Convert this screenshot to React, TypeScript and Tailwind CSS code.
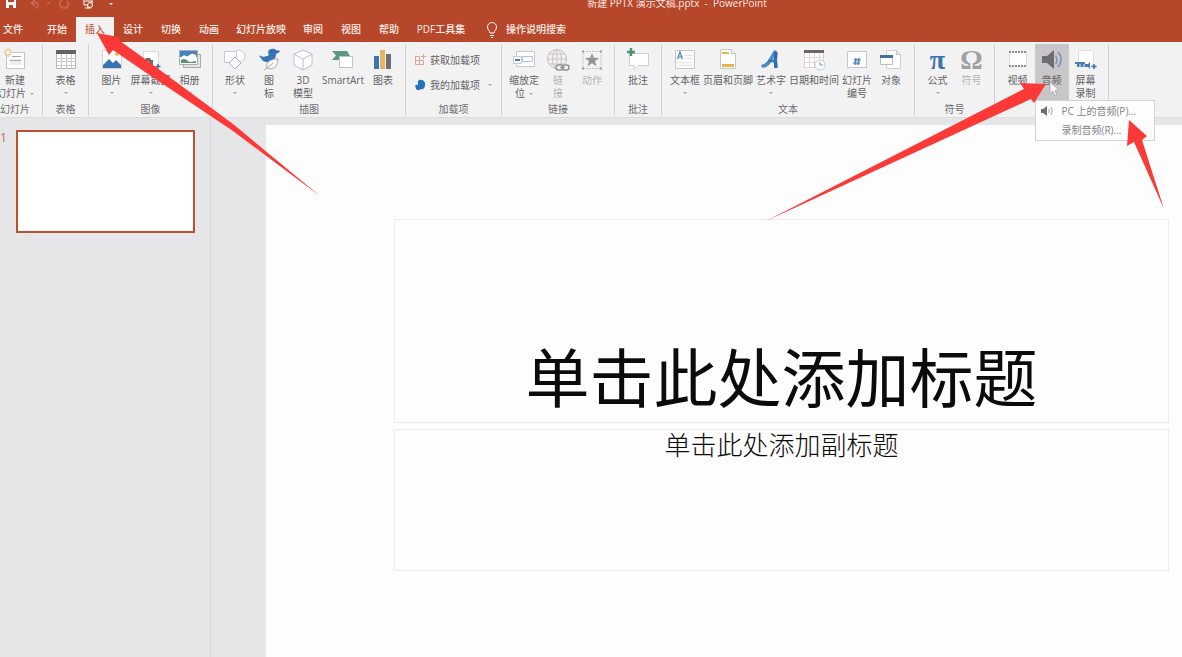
import type { ReactNode } from "react";

const tabs = [
  { label: "文件", width: "w-[38px] pr-3" },
  { label: "开始", width: "w-[38px]" },
  { label: "插入", width: "w-[38px]" },
  { label: "设计", width: "w-[38px]" },
  { label: "切换", width: "w-[38px]" },
  { label: "动画", width: "w-[38px]" },
  { label: "幻灯片放映", width: "w-[66px]" },
  { label: "审阅", width: "w-[38px]" },
  { label: "视图", width: "w-[38px]" },
  { label: "帮助", width: "w-[38px]" },
  { label: "PDF工具集", width: "w-[66px]" },
];

function Icon({ children }: { children: ReactNode }) {
  return (
    <svg className="h-6 w-6 shrink-0" viewBox="0 0 24 24" fill="none" aria-hidden="true">
      {children}
    </svg>
  );
}

function NewSlideIcon() {
  return (
    <Icon>
      <rect x="3.5" y="4.5" width="18" height="16" fill="#fff" stroke="#c4c5c8" />
      <path d="M7 11h11v6H7z" fill="#eceef2" />
      <path d="M9 8.5h9M7 12.5h11" stroke="#a9abb0" />
      <path d="M5 0v9M.5 4.5h9M2 1.5l6 6M8 1.5l-6 6" stroke="#edc58a" strokeWidth="1.3" />
      <circle cx="5" cy="4.5" r="2" fill="#fff5e2" />
    </Icon>
  );
}

function TableIcon() {
  return (
    <Icon>
      <path d="M2.5 3.5h19v17h-19z" fill="#fff" stroke="#b4b4b6" />
      <path d="M2 2h20v4H2z" fill="#636366" />
      <path
        d="M2.5 10.5h19M2.5 13.5h19M2.5 17.5h19M7.5 6v14.5M12.5 6v14.5M17.5 6v14.5"
        stroke="#c9c9cc"
      />
    </Icon>
  );
}

function PictureIcon() {
  return (
    <Icon>
      <path d="M2.5 2.5h19v18h-19z" fill="#fff" stroke="#d0d2d6" />
      <path d="M3 20v-3l6-6 4 4 3-3 5 5v3z" fill="#3a74b0" />
      <circle cx="17" cy="6" r="2" fill="#eeb765" />
    </Icon>
  );
}

function ScreenshotIcon() {
  return (
    <Icon>
      <path d="M4.5 3.5h15v15h-15z" fill="#fff" stroke="#d8d8db" />
      <path d="M3 12h3l1-2h4l1 2h2v7H3z" fill="#6b6b6e" />
      <circle cx="8.5" cy="15" r="2" fill="#fff" />
      <path d="M19 16v5M16.5 18.5h5" stroke="#3a74b0" strokeWidth="1.5" />
    </Icon>
  );
}

function AlbumIcon() {
  return (
    <Icon>
      <path d="M5.5 6.5h17v13h-17z" fill="#e4e4e6" stroke="#a8a9ac" />
      <path d="M1.5 2.5h18v14h-18z" fill="#fff" stroke="#a6acb2" />
      <path d="M2 3h17v6H2z" fill="#4384bc" />
      <path d="M3 10c3-5 5-1 7-2s3-4 8-1v4H3z" fill="#fff" />
      <path d="M3 15v-3c3-2 5-1 7 1s5 0 8 0v2z" fill="#599570" />
    </Icon>
  );
}

function ShapesIcon() {
  return (
    <Icon>
      <circle cx="16" cy="8" r="6" fill="#fff" stroke="#c6cedf" />
      <path d="M1.5 3.5h12v11h-12z" fill="#fff" stroke="#c3cadc" />
      <path d="m12 9 6 6-6 6-6-6z" fill="#fff" stroke="#a7b3cf" />
    </Icon>
  );
}

function IconsIcon() {
  return (
    <Icon>
      <path
        d="M2 7c2 2 5 2 8 1 2 0 2-2 1-4 1-4 6-4 8-2 1 1 3 0 4 1-1 2-3 2-4 3 0 3-1 5-3 6-5 4-11 2-12-2l2 1c-2-1-4-2-4-4z"
        fill="#3574b5"
      />
      <path d="M10 20c-2-6 4-9 11-9 0 7-4 12-11 9zM7 22c3-2 6-4 9-7" fill="#f8f8f8" stroke="#a9a9ac" />
    </Icon>
  );
}

function CubeIcon() {
  return (
    <Icon>
      <path d="m12 2 9 4v11l-9 5-9-5V6z" fill="#fff" stroke="#b7bfd9" />
      <path d="m3 6 9 5 9-5M12 11v11" stroke="#b7bfd9" />
    </Icon>
  );
}

function SmartArtIcon() {
  return (
    <Icon>
      <path d="M1 3h15l3 5-3 4H1l4-4.5z" fill="#5d9884" />
      <path d="M8.500 8.500h13v11h-13z" fill="#fff" stroke="#c2c2c5" />
    </Icon>
  );
}

function ChartIcon() {
  return (
    <Icon>
      <path d="M3 8h5v13H3z" fill="#3b73b3" />
      <path d="M9 2h5v19H9z" fill="#e5b467" />
      <path d="M15 6h5v15h-5z" fill="#6e6e70" />
    </Icon>
  );
}

function ZoomIcon() {
  return (
    <Icon>
      <path d="M4.5 3.5h18v15h-18z" fill="#fff" stroke="#c3cadb" />
      <path d="M10.5 8.5h10v5h-10z" stroke="#b8c0d6" />
      <path d="M1.5 8.5h8v7h-8z" fill="#fff" stroke="#c3cadb" />
      <path d="M3 12h5" stroke="#4e7eb4" strokeWidth="2" />
    </Icon>
  );
}

function LinkIcon() {
  return (
    <Icon>
      <g stroke="#c9bdc9">
        <circle cx="11" cy="11" r="9.5" />
        <ellipse cx="11" cy="11" rx="4.5" ry="9.5" />
        <path d="M11 1.5v19M1.5 11h19M3 6h16M3 16h16" />
      </g>
      <rect x="10" y="17" width="7" height="5" rx="2.5" fill="#f2f2f2" stroke="#929295" strokeWidth="1.5" />
      <rect x="16" y="17" width="7" height="5" rx="2.5" stroke="#929295" strokeWidth="1.5" />
      <path d="M14 19.5h5" stroke="#929295" />
    </Icon>
  );
}

function ActionIcon() {
  return (
    <Icon>
      <path d="M3 3.5h18v17H3z" stroke="#c6bfc8" strokeDasharray="2 1" />
      <path d="m12 5 1.8 4.800 5.200.2-4 3.200 1.400 5L12 15.300 7.600 18.200l1.400-5L5 10l5.200-.2z" fill="#959297" />
      <path d="M2 2.5h2v2H2zM20 2.5h2v2h-2zM2 19.500h2v2H2zM20 19.500h2v2h-2z" fill="#9d97a0" />
    </Icon>
  );
}

function CommentIcon() {
  return (
    <Icon>
      <path d="M3.5 5.5h19v12H12l-4 4v-4H3.500z" fill="#fff" stroke="#cecfd1" />
      <path d="M5 0v8M1 4h8" stroke="#47936f" strokeWidth="2.5" />
    </Icon>
  );
}

function TextBoxIcon() {
  return (
    <Icon>
      <path d="M2.5 2.5h19v18h-19z" fill="#fafafb" stroke="#c4c7cd" />
      <path d="m4.5 11 2.5-7 2.500 7M5.500 9h3" stroke="#4b85ba" strokeWidth="1.2" />
      <path d="M12 7.500h7M12 10.500h7M5 14.500h14M5 17.500h14" stroke="#e3e5ea" />
    </Icon>
  );
}

function HeaderFooterIcon() {
  return (
    <Icon>
      <path d="M4.5 1.5h11l4 4v15h-15z" fill="#fff" stroke="#c9c9cc" />
      <path d="M15.5 1.5v4h4" stroke="#c2c2c5" />
      <path d="M6 4h7v2H6zM6 16h12v3H6z" fill="#e9b654" />
    </Icon>
  );
}

function WordArtIcon() {
  return (
    <Icon>
      <path d="M4 18c5 0 7-6 12-14" stroke="#4a8cc8" strokeWidth="3.500" strokeLinecap="round" />
      <path d="M17 4c-1 6-1 10 0 16" stroke="#2f69a6" strokeWidth="3.500" />
      <path d="M9 13h9" stroke="#3876b4" strokeWidth="2.500" />
    </Icon>
  );
}

function CalendarIcon() {
  return (
    <Icon>
      <path d="M2.5 3.5h19v16h-19z" fill="#fff" stroke="#ddd2d2" />
      <path d="M2 2h20v3H2z" fill="#6a6668" />
      <path d="M2 9.5h20M2 14.500h20M7.500 5v15M12.500 5v15M17.500 5v15" stroke="#e7d5d2" />
      <circle cx="18" cy="17" r="5" fill="#fff" stroke="#c6cbd8" />
      <path d="M18 14v3h3" stroke="#7797be" />
    </Icon>
  );
}

function SlideNumberIcon() {
  return (
    <Icon>
      <path d="M2.5 3.500h19v16h-19z" fill="#fff" stroke="#c6c6ca" />
      <path d="M9 10h6v7H9z" fill="#c7d7e8" />
      <path d="m11 10-1 7M14 10l-1 7M9 12h7M8 15h7" stroke="#487fae" />
    </Icon>
  );
}

function ObjectIcon() {
  return (
    <Icon>
      <path d="M7.500 2.500h10l4 4v14h-14z" fill="#fff" stroke="#cecfd1" />
      <path d="M17.500 2.500v4h4" stroke="#c6c6c9" />
      <path d="M1.500 7.500h12v9h-12z" fill="#fff" stroke="#b7c1d0" />
      <path d="M1 7h13v3H1z" fill="#42719f" />
    </Icon>
  );
}

function SymbolIcon({ glyph, color }: { glyph: string; color: string }) {
  return (
    <span className={`h-6 font-['Liberation_Serif',serif] text-[28px] font-bold leading-6 ${color}`} aria-hidden="true">
      {glyph}
    </span>
  );
}

function VideoIcon() {
  return (
    <Icon>
      <path d="M3.500 3.500h17v15h-17z" fill="#fff" stroke="#dddbdc" />
      <path d="M3 4h18M3 18h18" stroke="#939194" strokeWidth="2" strokeDasharray="2 1" />
    </Icon>
  );
}

function AudioIcon() {
  return (
    <Icon>
      <path d="M2 8h5l7-6v19l-7-6H2z" fill="#6d6d70" />
      <path d="M15.500 8c2 2 2 6 0 8M18 4c4 4 4 11 0 15" stroke="#7794b8" strokeWidth="1.500" />
    </Icon>
  );
}

function ScreenRecordIcon() {
  return (
    <Icon>
      <path d="M4.500 2.500h15v15h-15z" fill="#fff" stroke="#e1e1e4" />
      <path d="M1 14h10v2h3l2-2v7l-2-2H3v-3H1z" fill="#4880b4" />
      <path d="M6 16v4M10 16v4" stroke="#e2ebf4" />
      <path d="M20 16v5M17.500 18.500h5" stroke="#3973ad" strokeWidth="1.500" />
    </Icon>
  );
}

function Caret() {
  return (
    <span className="inline-block border-x-2 border-t-2 border-x-transparent border-t-[#a5a5a8] align-middle" />
  );
}

function Tool({
  icon,
  lines,
  caret,
  width = "w-[34px]",
  disabled = false,
  active = false,
}: {
  icon: ReactNode;
  lines: string[];
  caret?: "below" | "inline";
  width?: string;
  disabled?: boolean;
  active?: boolean;
}) {
  const last = lines.length - 1;

  return (
    <button
      type="button"
      disabled={disabled}
      className={`flex shrink-0 flex-col items-center pt-1 ${width} ${active ? "bg-[#c8c6c8]" : ""} ${disabled ? "text-[#b4b4b6]" : "text-[#626265]"}`}
    >
      {icon}
      <span className="mt-0.5 flex flex-col items-center whitespace-nowrap leading-[13px]">
        {lines.map((line, i) => (
          <span key={line}>
            {line}
            {caret === "inline" && i === last ? (
              <span className="ml-1 inline-flex align-middle">
                <Caret />
              </span>
            ) : null}
          </span>
        ))}
      </span>
      {caret === "below" ? (
        <span className="flex h-3 items-center">
          <Caret />
        </span>
      ) : null}
    </button>
  );
}

function Group({ label, width, children }: { label: string; width: string; children: ReactNode }) {
  return (
    <section className={`flex shrink-0 flex-col border-r border-[#d4d4d6] ${width}`}>
      <div className="flex flex-1 justify-center">{children}</div>
      <div className="h-[14px] text-center leading-[14px] text-[#6c6c6f]">{label}</div>
    </section>
  );
}

function TitleBar() {
  return (
    <header className="relative flex h-[17px] items-start text-[#fbe9e3]">
      <svg className="h-3 w-32" viewBox="0 0 128 12" fill="none" aria-hidden="true">
        <path d="M6 0h10v8H6z" fill="#fff" />
        <path d="M8 0h6v2H8zM9 5h4v3H9z" fill="#b7472a" />
        <path d="m31 3 4-3M31 3l4 3M31 3h5c3 0 3 4 0 5" stroke="#ce6b54" strokeWidth="1.500" />
        <path d="M47 3h3M67 1c3 3 1 7-3 7s-6-5-2-8" stroke="#cc6b54" strokeWidth="1.500" />
        <path d="M83 1h10M84 1v4h8V1M88 5v3M85 8h6" stroke="#fff" />
        <circle cx="90" cy="5" r="2.500" fill="#b7472a" stroke="#fff" />
        <path d="M109 3h4l-2 2z" fill="#fff" />
      </svg>
      <h1 className="absolute inset-x-0 ml-[172px] text-center leading-[6px]">
        新建 PPTX 演示文稿.pptx&nbsp; -&nbsp; PowerPoint
      </h1>
    </header>
  );
}

function TabBar() {
  return (
    <nav className="flex h-[25px] items-stretch font-medium text-[#fdeee9]">
      {tabs.map((tab) => (
        <button
          key={tab.label}
          type="button"
          className={`shrink-0 whitespace-nowrap ${tab.width} ${tab.label === "插入" ? "bg-[#f3f2f3] text-[#c4634b]" : ""}`}
        >
          {tab.label}
        </button>
      ))}
      <button type="button" className="ml-3 flex items-center gap-2 whitespace-nowrap">
        <svg className="h-4 w-3" viewBox="0 0 12 16" fill="none" stroke="#fff" aria-hidden="true">
          <path d="M4 11c0-2-2.500-3-2.500-6a4.500 4.500 0 0 1 9 0c0 3-2.500 4-2.500 6zM4 13.500h4M5 15.500h2" />
        </svg>
        操作说明搜索
      </button>
    </nav>
  );
}

function AudioMenu() {
  return (
    <div
      role="menu"
      className="absolute left-0 top-full z-10 w-[120px] border border-[#d2d2d4] bg-[#fdfdfd] text-[#858588]"
    >
      <button type="button" role="menuitem" className="flex h-5 w-full items-center gap-2 whitespace-nowrap pl-1">
        <svg className="h-3 w-[14px]" viewBox="0 0 14 12" fill="none" aria-hidden="true">
          <path d="M1 4h2l4-3v10L3 8H1z" fill="#707073" />
          <path d="M8.500 4c1 1 1 3 0 4M10.500 2c2 2 2 6 0 8" stroke="#8ea1bb" />
        </svg>
        PC 上的音频(P)...
      </button>
      <button type="button" role="menuitem" className="flex h-[19px] w-full items-center whitespace-nowrap pl-[26px]">
        录制音频(R)...
      </button>
    </div>
  );
}

function Ribbon() {
  return (
    <div className="flex h-[76px] border-b border-[#dcdcdf] bg-[#f3f2f3] pb-px pt-[2px]">
      <Group label="幻灯片" width="w-[43px] pr-3">
        <Tool icon={<NewSlideIcon />} lines={["新建", "幻灯片"]} caret="inline" />
      </Group>
      <Group label="表格" width="w-[46px]">
        <Tool icon={<TableIcon />} lines={["表格"]} caret="below" />
      </Group>
      <Group label="图像" width="w-[124px]">
        <Tool icon={<PictureIcon />} lines={["图片"]} caret="below" width="w-[38px]" />
        <Tool icon={<ScreenshotIcon />} lines={["屏幕截图"]} caret="below" width="w-[40px]" />
        <Tool icon={<AlbumIcon />} lines={["相册"]} caret="below" width="w-[38px]" />
      </Group>
      <Group label="插图" width="w-[193px]">
        <Tool icon={<ShapesIcon />} lines={["形状"]} caret="below" />
        <Tool icon={<IconsIcon />} lines={["图", "标"]} />
        <Tool icon={<CubeIcon />} lines={["3D", "模型"]} />
        <Tool icon={<SmartArtIcon />} lines={["SmartArt"]} width="w-[46px]" />
        <Tool icon={<ChartIcon />} lines={["图表"]} />
      </Group>
      <Group label="加载项" width="w-[96px]">
        <div className="flex w-full flex-col gap-[9px] pl-2 pt-2 text-[#626265]">
          <button type="button" className="flex h-4 items-center gap-1">
            <svg className="h-3 w-3" viewBox="0 0 12 12" fill="none" stroke="#e3a094" aria-hidden="true">
              <path d="M1.500 2.500h4v4h-4zM1.500 6.500h4v4h-4zM5.500 6.500h4v4h-4zM9.500 0v5M7 2.500h5" />
            </svg>
            获取加载项
          </button>
          <button type="button" className="flex h-4 items-center gap-1">
            <svg className="h-3 w-3" viewBox="0 0 12 12" aria-hidden="true">
              <path d="M4 2c3-3 8 0 7 4 0 3-2 5-4 4-2 2-6 1-5-1-2-2 0-4 2-3z" fill="#2374bd" />
            </svg>
            我的加载项
            <span className="ml-1 flex">
              <Caret />
            </span>
          </button>
        </div>
      </Group>
      <Group label="链接" width="w-[113px]">
        <Tool icon={<ZoomIcon />} lines={["缩放定", "位"]} caret="inline" />
        <Tool icon={<LinkIcon />} lines={["链", "接"]} disabled />
        <Tool icon={<ActionIcon />} lines={["动作"]} disabled />
      </Group>
      <Group label="批注" width="w-[47px]">
        <Tool icon={<CommentIcon />} lines={["批注"]} />
      </Group>
      <Group label="文本" width="w-[253px]">
        <Tool icon={<TextBoxIcon />} lines={["文本框"]} caret="below" />
        <Tool icon={<HeaderFooterIcon />} lines={["页眉和页脚"]} width="w-[52px]" />
        <Tool icon={<WordArtIcon />} lines={["艺术字"]} caret="below" />
        <Tool icon={<CalendarIcon />} lines={["日期和时间"]} width="w-[52px]" />
        <Tool icon={<SlideNumberIcon />} lines={["幻灯片", "编号"]} />
        <Tool icon={<ObjectIcon />} lines={["对象"]} />
      </Group>
      <Group label="符号" width="w-[80px]">
        <Tool icon={<SymbolIcon glyph="π" color="text-[#3a75b0]" />} lines={["公式"]} caret="below" />
        <Tool icon={<SymbolIcon glyph="Ω" color="text-[#a1a1a3]" />} lines={["符号"]} disabled />
      </Group>
      <Group label="" width="w-[114px]">
        <Tool icon={<VideoIcon />} lines={["视频"]} />
        <div className="relative flex h-14">
          <Tool icon={<AudioIcon />} lines={["音频"]} active />
          <AudioMenu />
        </div>
        <Tool icon={<ScreenRecordIcon />} lines={["屏幕", "录制"]} />
      </Group>
    </div>
  );
}

function Annotations() {
  return (
    <svg
      className="pointer-events-none absolute left-0 top-0 z-20 h-[240px] w-[1182px]"
      viewBox="0 0 1182 240"
      aria-hidden="true"
    >
      <path d="M1050 82v12l3-3 2 5 2-1-2-5h4z" fill="#fff" stroke="#b5a9b2" />
      <g fill="#fb3a38">
        <path d="M97 33l22 4 1 4 25 18 65 48 23 17 87 72-87-65-88-59-32-22-4 5z" />
        <path d="M1046 84l-26-1 4 6-258 132 265-122 3 4z" />
        <path d="M1129 120l18 16-5 4 22 69-30-67-7 4z" />
      </g>
    </svg>
  );
}

export default function App() {
  return (
    <div className="relative flex min-h-screen flex-col overflow-hidden bg-[#e6e6e9] font-['Open_Sans','Noto_Sans_CJK_SC',sans-serif] text-[10px]">
      <div className="bg-[#b7472a]">
        <TitleBar />
        <TabBar />
      </div>
      <Ribbon />
      <main className="flex flex-1">
        <aside className="flex w-[211px] shrink-0 items-start border-r border-[#dadadd] pt-3">
          <span className="w-4 text-xs text-[#c96b50]">1</span>
          <button
            type="button"
            aria-label="1"
            className="h-[103px] w-[179px] border-2 border-[#b9522f] bg-white"
          />
        </aside>
        <section className="ml-[55px] mt-[7px] flex flex-1 flex-col gap-[6px] bg-[#fdfdfd] pb-[87px] pl-32 pr-[13px] pt-[94px] text-center text-[#0b0b0b]">
          <h2 className="flex h-[204px] items-end justify-center border border-[#ececed] pb-1 text-[64px] leading-[80px]">
            单击此处添加标题
          </h2>
          <p className="h-[142px] border border-[#ececed] text-[26px] font-light leading-[30px]">单击此处添加副标题</p>
        </section>
      </main>
      <Annotations />
    </div>
  );
}
